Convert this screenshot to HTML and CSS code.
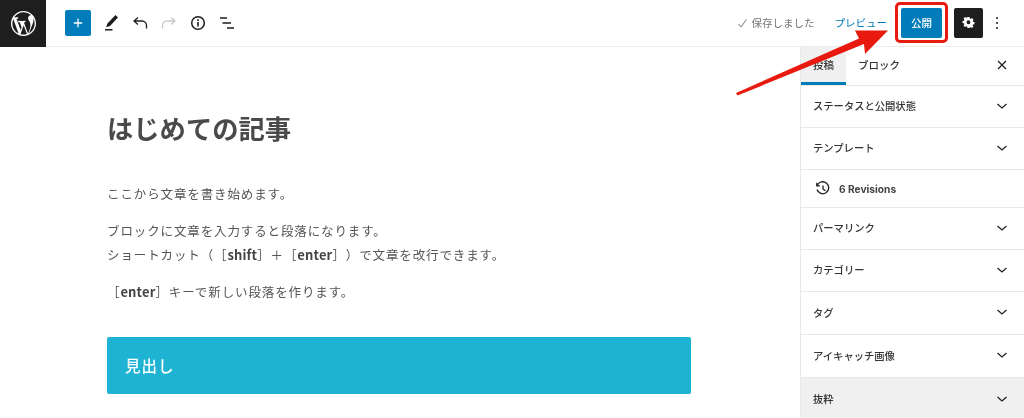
FILE: index.html
```html
<!DOCTYPE html>
<html lang="ja">
<head>
<meta charset="utf-8">
<title>はじめての記事</title>
<link rel="stylesheet" href="styles.css">
</head>
<body>
<div class="app">
  <header class="topbar">
    <div class="logo">
      <svg width="25" height="25" viewBox="0 0 20 20"><path fill="#fff" d="M20 10c0-5.51-4.49-10-10-10C4.480 0 0 4.490 0 10c0 5.520 4.480 10 10 10 5.510 0 10-4.480 10-10zM7.780 15.370L4.370 6.220c.55-.02 1.170-.08 1.170-.08.5-.06.44-1.130-.06-1.110 0 0-1.450.11-2.370.11-.18 0-.37 0-.58-.01C4.120 2.690 6.890 1.050 10 1.050c2.330 0 4.450.87 6.030 2.340-.98-.14-2.370.58-2.370 2.340 0 .95.58 1.750 1.170 2.700.44.78.7 1.780.7 3.230 0 1.970-1.860 6.610-1.860 6.610l-3.290-9.090c.58-.02.89-.18.89-.18.5-.05.44-1.250-.06-1.220 0 0-1.570.12-2.590.12-.94 0-2.520-.12-2.520-.12-.5-.03-.56 1.200-.06 1.220 0 0 .47.06.97.08l1.450 3.970-2.030 6.090zM17.410 10c.24-.64.74-1.870.43-4.250.7 1.290 1.050 2.710 1.050 4.250 0 3.290-1.730 6.240-4.480 7.830 1-2.680 2-5.380 3-7.830zM6.100 18.090C3.120 16.650 1.110 13.530 1.110 10c0-1.300.23-2.480.72-3.590 1.420 3.890 2.840 7.790 4.270 11.680zm4.030-6.630l2.580 6.980c-.86.29-1.740.45-2.710.45-.82 0-1.610-.11-2.350-.33 1-2.840 1.980-5.580 2.480-7.100z"/></svg>
    </div>
    <div class="tools">
      <button class="add" type="button" aria-label="追加">
        <svg width="18" height="18" viewBox="0 0 18 18"><path d="M9 4.800v8.400M4.800 9h8.400" stroke="#fff" stroke-width="1.300"/></svg>
      </button>
      <svg class="tool" width="24" height="24" viewBox="0 0 24 24"><path fill="#1e1e1e" d="M16.500 4l2.500 2.500-8 8.500-3.800 1.200 1.200-3.800zM6 18h7.500v1.500H6z"/></svg>
      <svg class="tool" width="24" height="24" viewBox="0 0 24 24"><path fill="none" stroke="#1e1e1e" stroke-width="1.300" d="M18.500 17.500v-3a4.500 4.500 0 0 0-4.500-4.500H6.500M10 6.500L6 10l4 3.500"/></svg>
      <svg class="tool" width="24" height="24" viewBox="0 0 24 24"><path fill="none" stroke="#c8c8c8" stroke-width="1.300" d="M5.500 17.500v-3a4.500 4.500 0 0 1 4.500-4.500h7.500M14 6.500l4 3.500-4 3.500"/></svg>
      <svg class="tool" width="24" height="24" viewBox="0 0 24 24"><circle cx="12" cy="12" r="6.300" fill="none" stroke="#1e1e1e" stroke-width="1.500"/><path fill="#1e1e1e" d="M11.200 11h1.600v4.500h-1.600zM11.200 8.300h1.600v1.600h-1.600z"/></svg>
      <svg class="tool" width="24" height="24" viewBox="0 0 24 24"><path stroke="#1e1e1e" stroke-width="1.400" d="M5 7h7M7.500 12h8.500M12 17h7"/></svg>
    </div>
    <div class="actions">
      <span class="saved">
        <svg width="14" height="14" viewBox="0 0 14 14"><path fill="none" stroke="#757575" stroke-width="1" d="M2.500 8l2.500 3 5.500-7.500"/></svg>
        保存しました
      </span>
      <a class="preview">プレビュー</a>
      <button class="publish" type="button">公開</button>
      <button class="settings" type="button" aria-label="設定">
        <svg width="13" height="13" viewBox="0 0 24 24"><path fill="#fff" fill-rule="evenodd" d="M10 3h4l.5 2.700 1.600.7 2.300-1.500 2.800 2.800-1.500 2.300.7 1.600 2.600.4v4l-2.700.5-.7 1.600 1.500 2.300-2.800 2.800-2.300-1.500-1.600.7L14 23h-4l-.5-2.600-1.600-.7-2.300 1.500-2.800-2.800 1.500-2.300-.7-1.600L1 14.100v-4l2.600-.5.7-1.600-1.500-2.300 2.800-2.800 2.300 1.500 1.600-.7zM12 9a3.500 3.500 0 1 0 0 7 3.500 3.500 0 0 0 0-7z" transform="translate(0 -1)"/></svg>
      </button>
      <span class="more"><i></i><i></i><i></i></span>
    </div>
  </header>
  <div class="body">
    <main class="editor">
      <h1 class="title">はじめての記事</h1>
      <p class="para">ここから文章を書き始めます。</p>
      <p class="para">ブロックに文章を入力すると段落になります。<br>ショートカット（［<b>shift</b>］＋［<b>enter</b>］）で文章を改行できます。</p>
      <p class="para">［<b>enter</b>］キーで新しい段落を作ります。</p>
      <h2 class="heading">見出し</h2>
    </main>
    <aside class="sidebar">
      <div class="tabs">
        <span class="tab tab-on">投稿</span>
        <span class="tab">ブロック</span>
        <svg class="close" width="14" height="14" viewBox="0 0 14 14"><path stroke="#1e1e1e" stroke-width="1.200" d="M3 3l8 8M11 3l-8 8"/></svg>
      </div>
      <div class="row r42">ステータスと公開状態<svg class="chev" width="14" height="14" viewBox="0 0 14 14"><path fill="none" stroke="#1e1e1e" stroke-width="1.200" d="M2.500 5l4.500 4 4.500-4"/></svg></div>
      <div class="row r42">テンプレート<svg class="chev" width="14" height="14" viewBox="0 0 14 14"><path fill="none" stroke="#1e1e1e" stroke-width="1.200" d="M2.500 5l4.500 4 4.500-4"/></svg></div>
      <div class="row r38 rev">
        <svg width="16" height="16" viewBox="0 0 16 16"><path fill="none" stroke="#1e1e1e" stroke-width="1.300" d="M2.200 4.500A6 6 0 1 1 2 8.500M1.800 1.800v3h3M8 4.500V8l2.500 1.700"/></svg>
        <span>6 Revisions</span>
      </div>
      <div class="row r42">パーマリンク<svg class="chev" width="14" height="14" viewBox="0 0 14 14"><path fill="none" stroke="#1e1e1e" stroke-width="1.200" d="M2.500 5l4.500 4 4.500-4"/></svg></div>
      <div class="row r42">カテゴリー<svg class="chev" width="14" height="14" viewBox="0 0 14 14"><path fill="none" stroke="#1e1e1e" stroke-width="1.200" d="M2.500 5l4.500 4 4.500-4"/></svg></div>
      <div class="row r43">タグ<svg class="chev" width="14" height="14" viewBox="0 0 14 14"><path fill="none" stroke="#1e1e1e" stroke-width="1.200" d="M2.500 5l4.500 4 4.500-4"/></svg></div>
      <div class="row r43">アイキャッチ画像<svg class="chev" width="14" height="14" viewBox="0 0 14 14"><path fill="none" stroke="#1e1e1e" stroke-width="1.200" d="M2.500 5l4.500 4 4.500-4"/></svg></div>
      <div class="row r43 row-hover">抜粋<svg class="chev" width="14" height="14" viewBox="0 0 14 14"><path fill="none" stroke="#1e1e1e" stroke-width="1.200" d="M2.500 5l4.500 4 4.500-4"/></svg></div>
    </aside>
  </div>
  <div class="callout-box"></div>
  <svg class="callout-arrow" width="170" height="80" viewBox="0 0 170 80"><path fill="#e8190e" d="M153 .5L120 .5 124 8.500 1 63 2.500 65.500 129 14 130 24z"/></svg>
</div>
</body>
</html>
```
FILE: styles.css
```css
* { box-sizing: border-box; }
html, body { margin: 0; padding: 0; }
body {
  width: 1024px;
  height: 418px;
  overflow: hidden;
  background: #fff;
  font-family: "Noto Sans CJK JP", "Noto Sans", sans-serif;
  color: #1e1e1e;
}
.app { position: relative; width: 1024px; height: 418px; overflow: hidden; filter: blur(.35px); }

.topbar {
  display: flex;
  align-items: center;
  height: 47px;
  border-bottom: 1px solid #ececec;
}
.logo {
  width: 46px;
  height: 47px;
  background: #1e1e1e;
  display: flex;
  align-items: center;
  justify-content: center;
}
.tools { display: flex; align-items: center; margin: 0 0 1px 19px; gap: 5px; }
.add {
  width: 26px;
  height: 26px;
  padding: 0;
  border: 0;
  border-radius: 2px;
  background: #007cba;
  display: flex;
  align-items: center;
  justify-content: center;
  margin-right: 3px;
}
.actions { margin-left: auto; display: flex; align-items: center; padding: 0 26px 1px 0; }
.saved {
  display: flex;
  align-items: center;
  gap: 2px;
  font-size: 10.500px;
  color: #757575;
}
.preview { font-size: 10.500px; color: #007cba; margin-left: 20px; }
.publish {
  width: 41px;
  height: 30px;
  margin-left: 14px;
  padding: 0;
  border: 0;
  border-radius: 2px;
  background: #007cba;
  color: #fff;
  font: 500 10.500px "Noto Sans CJK JP", sans-serif;
}
.settings {
  width: 29px;
  height: 30px;
  margin-left: 12px;
  padding: 0;
  border: 0;
  border-radius: 2px;
  background: #1e1e1e;
  display: flex;
  align-items: center;
  justify-content: center;
}
.more { display: flex; flex-direction: column; gap: 3px; margin-left: 13px; }
.more i { width: 2px; height: 2px; border-radius: 50%; background: #1e1e1e; }

.body { display: flex; height: 371px; }
.editor { flex: 1; padding: 62px 109px 0 107px; min-width: 0; }
.title {
  margin: 0 0 35px;
  font-size: 26.300px;
  line-height: 38px;
  font-weight: 700;
  color: #4a4a4a;
}
.para {
  margin: 0 0 13px;
  font-size: 12.500px;
  line-height: 24px;
  letter-spacing: .88px;
  color: #555;
  white-space: nowrap;
  text-spacing-trim: space-all;
}
.para b { font-size: 13px; font-weight: 700; letter-spacing: .15px; color: #444; }
.heading {
  margin: 33px 0 0;
  height: 57px;
  padding: 0 18px 1px;
  display: flex;
  align-items: center;
  border-radius: 2px;
  background: #1eb2d3;
  color: #fff;
  font-size: 15.500px;
  font-weight: 500;
  letter-spacing: 1px;
}

.sidebar {
  width: 224px;
  flex: none;
  border-left: 1px solid #e8e8e8;
  overflow: hidden;
}
.tabs {
  display: flex;
  align-items: center;
  height: 39px;
  border-bottom: 1px solid #e8e8e8;
}
.tab {
  height: 38px;
  padding: 0 12px 3px;
  display: flex;
  align-items: center;
  font-size: 10.500px;
  font-weight: 500;
  color: #333;
}
.tab-on { width: 45px; background: #f0f0f0; box-shadow: inset 0 -3px 0 #007cba; }
.close { margin: 0 15px 3px auto; }
.row {
  display: flex;
  align-items: center;
  justify-content: space-between;
  padding: 0 15px 2px 12px;
  border-bottom: 1px solid #e8e8e8;
  font-size: 10.300px;
  font-weight: 500;
  color: #333;
}
.r38 { height: 38px; }
.r42 { height: 42px; }
.r43 { height: 43px; }
.rev { justify-content: flex-start; gap: 8px; padding: 0 0 0 14px; font: 700 10.200px "Inter", sans-serif; color: #444; }
.row-hover { background: #f0f0f0; border-bottom: 0; }

.callout-box {
  position: absolute;
  left: 895px;
  top: 2px;
  width: 53px;
  height: 41px;
  border: 3px solid #e8190e;
  border-radius: 5px;
}
.callout-arrow { position: absolute; left: 735px; top: 30px; }
```
